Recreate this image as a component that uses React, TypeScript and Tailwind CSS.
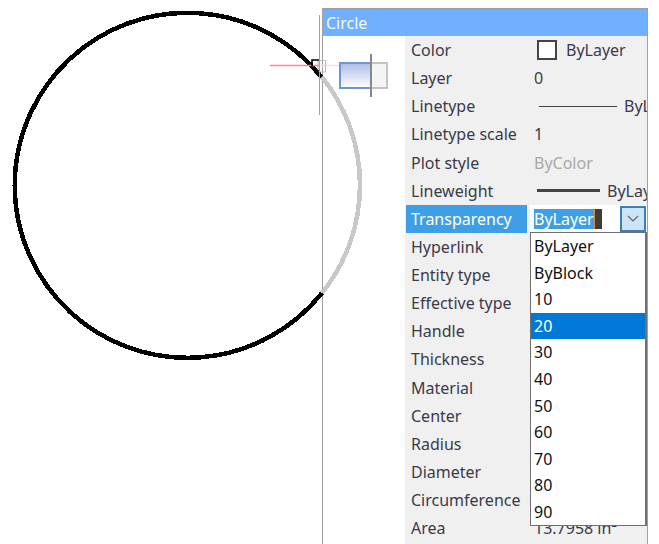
const rows: { label: string; value?: string; kind?: string }[] = [
  { label: "Color", kind: "color" },
  { label: "Layer", value: "0" },
  { label: "Linetype", kind: "linetype" },
  { label: "Linetype scale", value: "1" },
  { label: "Plot style", kind: "plot" },
  { label: "Lineweight", kind: "lineweight" },
  { label: "Transparency", kind: "edit" },
  { label: "Hyperlink" },
  { label: "Entity type" },
  { label: "Effective type" },
  { label: "Handle" },
  { label: "Thickness" },
  { label: "Material" },
  { label: "Center" },
  { label: "Radius" },
  { label: "Diameter" },
  { label: "Circumference" },
  { label: "Area", value: "13.7958 in²" },
];

const options = ["ByLayer", "ByBlock", "10", "20", "30", "40", "50", "60", "70", "80", "90"];

function Value({ row }: { row: (typeof rows)[number] }) {
  if (row.kind === "color") {
    return (
      <div className="flex items-center gap-[9px] pl-[3px]">
        <span className="w-[20px] h-[20px] border-2 border-[#444] bg-white" />
        <span>ByLayer</span>
      </div>
    );
  }
  if (row.kind === "linetype") {
    return (
      <div className="flex items-center gap-[7px] pl-[5px]">
        <span className="w-[78px] h-[1px] bg-[#444] shrink-0" />
        <span>ByLayer</span>
      </div>
    );
  }
  if (row.kind === "lineweight") {
    return (
      <div className="flex items-center gap-[7px] pl-[3px]">
        <span className="w-[63px] h-[3px] bg-[#444] shrink-0" />
        <span>ByLayer</span>
      </div>
    );
  }
  if (row.kind === "plot") return <span className="text-[#a8a8a8]">ByColor</span>;
  if (row.kind === "edit") {
    return (
      <div className="flex items-center h-[28px] bg-white -ml-[4px] pl-[4px] pr-[1px]">
        <span className="bg-[#3f9fe6] text-white h-[20px] leading-[20px]">ByLayer</span>
        <span className="w-[8px] h-[20px] bg-[#3c3c3c] border-l border-[#e08a3c]" />
        <span className="ml-auto w-[26px] h-[26px] border-2 border-[#3c7fb1] bg-[#cce4f7] flex items-center justify-center">
          <svg width="12" height="7" viewBox="0 0 12 7" fill="none" stroke="#666" strokeWidth="1.2">
            <path d="M1 1l5 5 5-5" />
          </svg>
        </span>
      </div>
    );
  }
  return <span>{row.value}</span>;
}

export default function App() {
  return (
    <div className="relative w-[659px] h-[544px] bg-white overflow-hidden font-['Noto_Sans',sans-serif] text-[16px] text-[#3a3a4a]">
      <div className="flex pl-[322px] pt-[8px] pr-[11px] h-full">
        <div className="relative flex flex-col flex-1 border-l border-t-2 border-r border-[#a0a0a0] min-w-0">
          <div className="h-[26px] shrink-0 bg-[#70b0ff] text-[#f4f8ff] pl-[3px] leading-[26px]">Circle</div>
          <div className="flex flex-1 min-h-0">
            <div className="w-[82px] shrink-0 bg-white" />
            <div className="flex-1 min-w-0 bg-[#f0f0f0] overflow-hidden">
              {rows.map((row) => (
                <div key={row.label} className="flex items-center h-[28.13px] whitespace-nowrap">
                  <div
                    className={
                      row.kind === "edit"
                        ? "w-[121px] ml-[1px] pl-[5px] mr-[3px] shrink-0 h-[28px] leading-[28px] bg-[#3f9fe6] text-white"
                        : "w-[121px] ml-[1px] pl-[5px] mr-[3px] shrink-0"
                    }
                  >
                    {row.label}
                  </div>
                  <div className="flex-1 min-w-0 pl-[4px] overflow-hidden">
                    <Value row={row} />
                  </div>
                </div>
              ))}
            </div>
          </div>
          {/* dropdown list */}
          <div className="absolute left-[207px] right-0 top-[222px] h-[294px] bg-white border border-r-2 border-[#707070] text-[#111]">
            {options.map((o) => (
              <div
                key={o}
                className={
                  o === "20"
                    ? "h-[26.6px] leading-[26.6px] pl-[3px] bg-[#0078d7] text-white"
                    : "h-[26.6px] leading-[26.6px] pl-[3px]"
                }
              >
                {o}
              </div>
            ))}
          </div>
        </div>
      </div>

      {/* drawing: circle, grips and crosshair sit over the panel */}
      <svg className="absolute inset-0 pointer-events-none" width="659" height="544" fill="none">
        <path d="M322 293A172.500 172.500 0 1 1 321.500 77" stroke="#000" strokeWidth="4.500" shapeRendering="crispEdges" />
        <path d="M322 77A172.500 172.500 0 0 1 322 293" stroke="#c8c8c8" strokeWidth="4.500" shapeRendering="crispEdges" />
        <path d="M270 65.500H320" stroke="#ff8585" strokeWidth="1.500" />
        <path d="M320 65.500H340" stroke="#ffdcdc" strokeWidth="1.500" />
        <path d="M319.500 15V115" stroke="#3ddc8f" strokeWidth="1" />
        <path d="M318 70V60.500H325.500V72H318" stroke="#bbb" strokeWidth="1" />
        <path d="M312 66V60H319M313 70l6 3" stroke="#000" strokeWidth="1.600" />
        <defs>
          <linearGradient id="fill" x1="0" y1="0" x2="0" y2="1">
            <stop offset="0" stopColor="#a9bde6" />
            <stop offset="1" stopColor="#ffffff" />
          </linearGradient>
        </defs>
        <rect x="340" y="63" width="31" height="25" fill="url(#fill)" stroke="#6d97d4" strokeWidth="2" />
        <rect x="371" y="63" width="16" height="25" fill="#f4f4f4" stroke="#c4c4c4" strokeWidth="2" />
        <path d="M371 54V97" stroke="#888" strokeWidth="2" />
      </svg>
    </div>
  );
}
